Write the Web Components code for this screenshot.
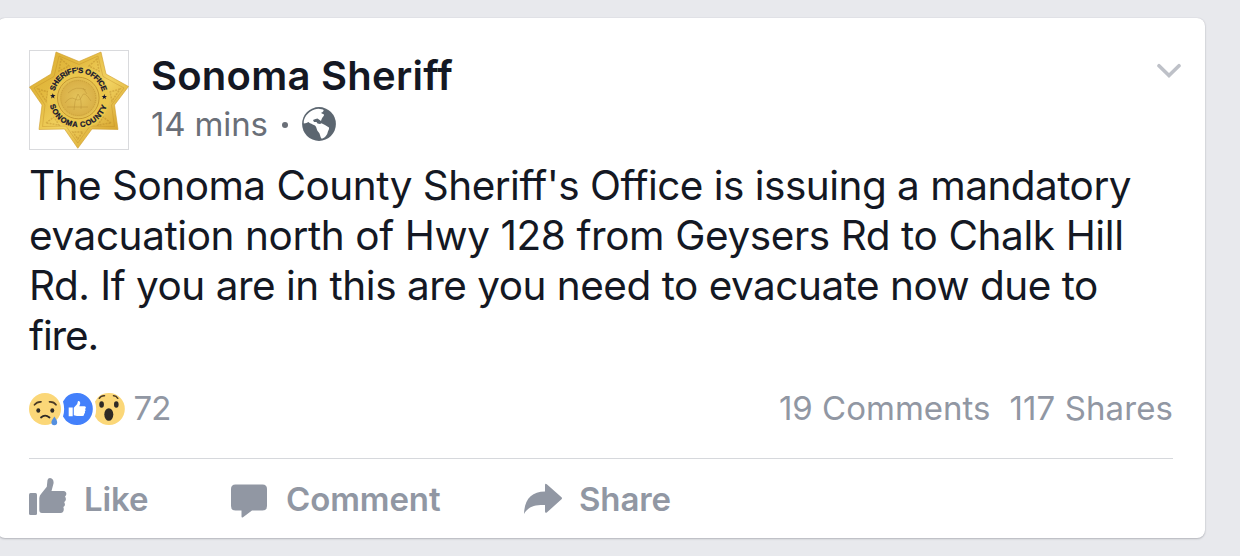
<!DOCTYPE html>
<html lang="en">
<head>
<meta charset="utf-8">
<title>Sonoma Sheriff</title>
<style>
    body {
        margin: 0;
        height: 556px;
        overflow: hidden;
        background: #e8e9ed;
        font-family: Inter, "Liberation Sans", sans-serif;
    }
</style>
</head>
<body>
<post-card>
    <post-header slot="header" name="Sonoma Sheriff" time="14 mins"></post-header>
    <post-text>
        <text-line style="letter-spacing: -0.52px">The Sonoma County Sheriff's Office is issuing a mandatory</text-line>
        <text-line style="letter-spacing: -0.41px">evacuation north of Hwy 128 from Geysers Rd to Chalk Hill</text-line>
        <text-line style="letter-spacing: -0.5px">Rd. If you are in this are you need to evacuate now due to</text-line>
        <text-line style="letter-spacing: -1.1px">fire.</text-line>
    </post-text>
    <post-stats slot="footer" reactions="72" comments="19 Comments" shares="117 Shares"></post-stats>
    <post-actions slot="footer">
        <action-button icon="like" style="width: 202px">Like</action-button>
        <action-button icon="comment" style="width: 293px">Comment</action-button>
        <action-button icon="share">Share</action-button>
    </post-actions>
</post-card>

<script>
class PostCard extends HTMLElement {
    constructor() {
        super();
        this.attachShadow({ mode: 'open' });
        this.shadowRoot.innerHTML = `
            <style>
                :host {
                    display: block;
                    box-sizing: border-box;
                    width: 1208px;
                    height: 520px;
                    margin: 18px 0 0 -3px;
                    padding: 32px 32px 0 32px;
                    background: white;
                    border-radius: 8px;
                    box-shadow: 0 0 1px #b9bbc1, 0 1px 2px #b4b6bb;
                }
            </style>
            <slot name="header"></slot>
            <slot></slot>
            <slot name="footer"></slot>
        `;
    }
}

class SheriffBadge extends HTMLElement {
    constructor() {
        super();
        this.attachShadow({ mode: 'open' });
        this.shadowRoot.innerHTML = `
            <style>
                :host {
                    display: block;
                    width: 100px;
                    height: 100px;
                    background: white;
                    box-shadow: inset 0 0 0 1px #d9dadd;
                }
                svg { display: block; }
                text {
                    font: bold 7.6px "Liberation Sans", sans-serif;
                    fill: #15152f;
                    stroke: #15152f;
                    stroke-width: .25px;
                }
                .office { letter-spacing: -0.35px; }
                .county { letter-spacing: 0.65px; }
            </style>
            <svg width="100" height="100" viewBox="0 0 100 100">
                <defs>
                    <linearGradient id="gold" x1="0" y1="0" x2="1" y2="1">
                        <stop offset="0" stop-color="#dcae30"/>
                        <stop offset=".3" stop-color="#e3ba40"/>
                        <stop offset=".55" stop-color="#f2d362"/>
                        <stop offset=".8" stop-color="#dcae38"/>
                        <stop offset="1" stop-color="#c8962a"/>
                    </linearGradient>
                    <radialGradient id="seal">
                        <stop offset="0" stop-color="#e4c45c"/>
                        <stop offset=".8" stop-color="#dab148"/>
                        <stop offset="1" stop-color="#e9c654"/>
                    </radialGradient>
                    <path id="top" d="M25.500 42A24.400 24.400 0 0 1 73.100 42"/>
                    <path id="bottom" d="M20.400 53.500A29.500 29.500 0 0 0 78.200 53.500"/>
                </defs>
                <path d="M27 2 50 11.500 72 2 77 24 99.500 36.500 85.500 55 89 79.500 63 79 48.800 98.300 35.500 79 10 79.500 13 55 .5 37 22 24Z" fill="url(#gold)" stroke="#cf9c2b" stroke-width=".6"/>
                <path d="M30 6 50 14.500 69 6 74 26.500 95 38 82.500 55 85.500 76.500 61 76 48.800 93 37 76 13.500 76.500 16 55 5 38 25 26.500Z" fill="none" stroke="#b98422" stroke-width="1" opacity=".35"/>
                <path d="M32 9l8 7-10 5zM68 9l-8 7 10 5zM91 39l-10 3 2 9zM9 39l10 3-2 9zM82 73l-8-6-5 8zM17 73l8-6 5 8zM48.800 89l5-7h-10z" fill="none" stroke="#ad791d" stroke-width="1.500" stroke-dasharray="2 1" opacity=".35"/>
                <circle cx="49.300" cy="48" r="31" fill="#ebc64c"/>
                <circle cx="49.300" cy="48" r="20.800" fill="url(#seal)" stroke="#ba8b2a" stroke-width=".8"/>
                <circle cx="49.300" cy="48" r="17.500" fill="none" stroke="#c69b36" stroke-width="1" stroke-dasharray="1 1"/>
                <path d="M36 53q5-7 10-4t7-3 9 5M39 43q8-8 18-3M45 60q0-9 4-16 4 5 3 15M38 57h21M54 38l4 6" fill="none" stroke="#b38a30" stroke-width="1" opacity=".4"/>
                <text class="office" text-anchor="middle"><textPath href="#top" startOffset="50%">SHERIFF'S OFFICE</textPath></text>
                <text class="county" text-anchor="middle"><textPath href="#bottom" startOffset="50%">SONOMA COUNTY</textPath></text>
                <path d="M23.800 43.200l.7 1.900 2 .1-1.600 1.200.6 2-1.700-1.200-1.700 1.200.6-2-1.600-1.200 2-.1zM75.300 44l.7 1.900 2 .1-1.600 1.200.6 2-1.700-1.200-1.700 1.200.6-2-1.600-1.200 2-.1z" fill="#15152f"/>
            </svg>
        `;
    }
}

class PostHeader extends HTMLElement {
    constructor() {
        super();
        this.attachShadow({ mode: 'open' });
    }

    connectedCallback() {
        const name = this.getAttribute('name') || '';
        const time = this.getAttribute('time') || '';

        this.shadowRoot.innerHTML = `
            <style>
                :host {
                    display: flex;
                    height: 100px;
                }
                .info {
                    flex: 1;
                    padding: 0 0 0 22px;
                }
                .name {
                    height: 50px;
                    line-height: 51px;
                    font-size: 40px;
                    font-weight: 600;
                    letter-spacing: 0.25px;
                    color: #141823;
                }
                .meta {
                    display: flex;
                    align-items: center;
                    height: 48px;
                    font-size: 33px;
                    color: #6a6f78;
                }
                .time { letter-spacing: -0.15px; }
                .dot {
                    width: 6px;
                    height: 6px;
                    margin: 2px 14px 0 14px;
                    border-radius: 50%;
                    background: #6a6f78;
                }
                .arrow { margin: 13px -8px 0 0; }
            </style>
            <sheriff-badge></sheriff-badge>
            <div class="info">
                <div class="name">${name}</div>
                <div class="meta">
                    <span class="time">${time}</span>
                    <span class="dot"></span>
                    <svg width="34" height="34" viewBox="0 0 34 34">
                        <circle cx="17" cy="17" r="16.900" fill="#5c6670"/>
                        <path d="M3 10.500C6 5 11 2 16.500 1.700L21 2.500C22.500 3.500 21 5 19 6L22 7.500C22.500 9 20 10 19 14L15.500 11.500 13.500 12 11 13 12 15 14.500 15 15.500 16.500 18 17 19.500 16.300 23 18 27 20.500C27.500 22 26 23.500 25.500 26 25 28.500 21.500 32 19.300 31.500 18 29.500 18.500 27 16 24.500 14.500 22.500 14.800 19.500 12.500 18.200 9 16.500 8 16.500 6.500 15 5 15.500 4 16.500 1.800 16.500 1.600 14 2 12.500 3 10.500Z" fill="white"/>
                    </svg>
                </div>
            </div>
            <svg class="arrow" width="24" height="16" viewBox="0 0 24 16">
                <path d="M2 2.700 12 12.500 22 2.700" fill="none" stroke="#bec1c8" stroke-width="3.600" stroke-linecap="round"/>
            </svg>
        `;
    }
}

class PostText extends HTMLElement {
    constructor() {
        super();
        this.attachShadow({ mode: 'open' });
        this.shadowRoot.innerHTML = `
            <style>
                :host {
                    display: block;
                    height: 200px;
                    padding: 11px 0 0;
                    font-size: 40.5px;
                    line-height: 50px;
                    color: #141823;
                }
            </style>
            <slot></slot>
        `;
    }
}

class TextLine extends HTMLElement {
    constructor() {
        super();
        this.attachShadow({ mode: 'open' });
        this.shadowRoot.innerHTML = `
            <style>
                :host {
                    display: block;
                    white-space: nowrap;
                }
            </style>
            <slot></slot>
        `;
    }
}

class PostStats extends HTMLElement {
    constructor() {
        super();
        this.attachShadow({ mode: 'open' });
    }

    connectedCallback() {
        const reactions = this.getAttribute('reactions') || '0';
        const comments = this.getAttribute('comments') || '';
        const shares = this.getAttribute('shares') || '';

        this.shadowRoot.innerHTML = `
            <style>
                :host {
                    display: flex;
                    align-items: center;
                    box-sizing: border-box;
                    height: 98px;
                    padding-bottom: 3px;
                    border-bottom: 1px solid #d6d8dc;
                    font-size: 33px;
                    color: #9197a3;
                    white-space: nowrap;
                }
                svg { margin-top: 2px; }
                .count {
                    flex: 1;
                    margin-left: 7.5px;
                    letter-spacing: -1px;
                }
                .shares {
                    margin-left: 19px;
                    letter-spacing: 0.1px;
                }
            </style>
            <svg width="97" height="34" viewBox="0 0 97 34">
                <circle cx="16" cy="17" r="16" fill="#fbd778"/>
                <path d="M5.500 12.800Q8 9.500 12 9.800M20.500 9.800Q25 9.500 27 12.800" fill="none" stroke="#4a3a25" stroke-width="1.700" stroke-linecap="round"/>
                <ellipse cx="9.300" cy="18.500" rx="2" ry="2.300" fill="#2e2a25"/>
                <ellipse cx="23.300" cy="18.500" rx="2" ry="2.300" fill="#2e2a25"/>
                <path d="M12 25.500Q16 21.700 20.500 25.500" fill="none" stroke="#2e2a25" stroke-width="1.800" stroke-linecap="round"/>
                <path d="M25.400 24.500C27 27 28.200 28.700 28.200 30.300A2.900 2.900 0 0 1 22.400 30.300C22.400 28.700 23.800 27 25.400 24.500Z" fill="#548fe0"/>

                <path d="M37 5.200A16 16 0 1 1 37 28.800L34 24.500Q36.300 17 34 9.500Z" fill="#4380fb"/>
                <path d="M39.700 15.500h4v8.800h-4zM44.800 15.800 48.200 11.900 49 8.900C51 8.700 51.500 10.500 51.100 12L50.300 14.300H55.500C57.500 14.500 57 16.500 56 17 57 17.800 56.500 19.200 55.800 19.500 56.500 20.500 55.500 21.800 55 22 55.500 23.300 54.500 24 53.500 24H48L44.800 23.200Z" fill="white"/>

                <path d="M69 5.200A16 16 0 1 1 69 28.800L66 24.500Q68.300 17 66 9.500Z" fill="#fbd778"/>
                <path d="M70.300 6.300Q72 3.500 75.500 3.700M84.500 3.700Q87 3.500 88.800 6.300" fill="none" stroke="#4a3a25" stroke-width="1.500" stroke-linecap="round"/>
                <ellipse cx="72.600" cy="12.500" rx="2.300" ry="3.300" fill="#2e2a25"/>
                <ellipse cx="87.300" cy="12.500" rx="2.300" ry="3.300" fill="#2e2a25"/>
                <ellipse cx="79.800" cy="22.500" rx="4.500" ry="6.300" fill="#2e2a25"/>
            </svg>
            <span class="count">${reactions}</span>
            <span class="comments">${comments}</span>
            <span class="shares">${shares}</span>
        `;
    }
}

class PostActions extends HTMLElement {
    constructor() {
        super();
        this.attachShadow({ mode: 'open' });
        this.shadowRoot.innerHTML = `
            <style>
                :host {
                    display: flex;
                    align-items: center;
                    height: 79px;
                }
            </style>
            <slot></slot>
        `;
    }
}

const icons = {
    like: '<rect x="0" y="15" width="8" height="22" rx="1.500"/><path d="M10.300 20Q10.500 17.500 12 16L17.800 8.700 18.500 2Q19 0 21 0C24 .3 24.900 3 24.500 5.500L22.500 12.900H34.500C38 13 38 17 36 18.500 37.500 20.500 37 23 35.200 24 36.500 26.500 36 28.500 34.300 29 35.500 31.500 34.500 35 31.500 35H13Q10.300 35 10.300 32Z"/>',
    comment: '<path d="M4.500 6.500H31.500Q36 6.500 36 11V28Q36 32.500 31.500 32.500H21L12 39.300Q10.500 40 10.500 38.500V32.500H4.500Q0 32.500 0 28V11Q0 6.500 4.500 6.500Z"/>',
    share: '<path d="M0 36C.5 21 7.500 13.500 21 13.400V7Q21.200 5 22.800 6.300L37.500 19.300Q38.500 20.300 37.500 21.300L22.800 34.500Q21.200 35.500 21 33.500V27C10.500 26.800 4.500 28.300 0 36Z"/>'
};

class ActionButton extends HTMLElement {
    constructor() {
        super();
        this.attachShadow({ mode: 'open' });
    }

    connectedCallback() {
        const icon = icons[this.getAttribute('icon')] || '';

        this.shadowRoot.innerHTML = `
            <style>
                :host {
                    display: flex;
                    align-items: center;
                    gap: 17px;
                    font-size: 33px;
                    font-weight: 600;
                    letter-spacing: -0.1px;
                    color: #9197a3;
                }
            </style>
            <svg width="38" height="42" viewBox="0 0 38 42" fill="#9197a3">${icon}</svg>
            <span><slot></slot></span>
        `;
    }
}

customElements.define('post-card', PostCard);
customElements.define('sheriff-badge', SheriffBadge);
customElements.define('post-header', PostHeader);
customElements.define('post-text', PostText);
customElements.define('text-line', TextLine);
customElements.define('post-stats', PostStats);
customElements.define('post-actions', PostActions);
customElements.define('action-button', ActionButton);
</script>
</body>
</html>
